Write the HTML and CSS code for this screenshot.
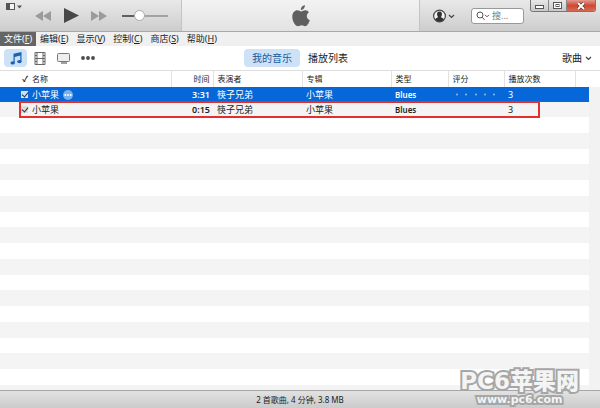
FILE: index.html
```
<!DOCTYPE html>
<html lang="zh-CN">
<head>
  <meta charset="UTF-8" />
  <meta name="viewport" content="width=device-width, initial-scale=1" />
  <title>iTunes</title>
  <link rel="stylesheet" href="styles.css">
</head>
<body>
  <header class="toolbar">
    <div class="player">
      <button class="icon-btn window-menu" aria-label="窗口菜单">
        <svg width="16" height="9" viewBox="0 0 16 9">
          <rect x="0.5" y="1.5" width="8" height="6" fill="#f4f4f4" stroke="#555" />
          <rect x="1" y="2" width="3" height="5" fill="#555" />
          <path d="M11 3.5h5l-2.500 3z" fill="#555" />
        </svg>
      </button>
      <button class="icon-btn" aria-label="上一首">
        <svg width="17" height="10" viewBox="0 0 17 10"><path d="M8 0v10L0 5zM16 0v10L8 5z" fill="#9b9b9b" /></svg>
      </button>
      <button class="icon-btn" aria-label="播放">
        <svg width="15" height="15" viewBox="0 0 15 15"><path d="M0 0l15 7.500L0 15z" fill="#484848" /></svg>
      </button>
      <button class="icon-btn" aria-label="下一首">
        <svg width="17" height="10" viewBox="0 0 17 10"><path d="M0 0l8 5-8 5zM8 0l8 5-8 5z" fill="#9b9b9b" /></svg>
      </button>
      <input type="range" class="volume" min="0" max="100" value="34" aria-label="音量" />
    </div>

    <div class="screen">
      <svg width="18" height="22" viewBox="0 0 18 22" fill="#5f5f5f">
        <path d="M12.800 0c.3 2.700-1.700 5-4 5.100C8.600 2.700 10.500.4 12.800 0z" />
        <path d="M9.300 6.400c1 0 2-1.100 4-1.100 1.500 0 2.900.8 3.700 2-3.300 2-2.700 6.600.8 7.900-.9 2.800-2.700 6-4.600 6-1.400 0-1.900-.9-3.600-.9s-2.200.9-3.500.9C3.400 21.200.3 16.500.3 11.700c0-4.200 2.500-6.400 5-6.400 1.700 0 3 1.100 4 1.100z" />
      </svg>
    </div>

    <div class="account">
      <button class="icon-btn user" aria-label="帐户">
        <svg width="22" height="14" viewBox="0 0 22 14">
          <circle cx="6.500" cy="7" r="5.900" fill="#f2f2f2" stroke="#444" stroke-width="1.200" />
          <path d="M6.500 2.500c2 0 2.700 1.400 2.400 3.200-.2 1.200-.6 1.700-.9 2.200.1 1 2.300 1 3 2.300C9.800 12 8.300 12.600 6.500 12.600S3.200 12 2 10.200c.7-1.300 2.900-1.300 3-2.300-.3-.5-.7-1-.9-2.200C3.800 3.900 4.500 2.500 6.500 2.500z" fill="#333" />
          <path d="M16 6l2.500 2.500L21 6" fill="none" stroke="#444" stroke-width="1.200" />
        </svg>
      </button>
      <label class="search">
        <svg width="14" height="10" viewBox="0 0 14 10" fill="none" stroke="#555">
          <circle cx="4" cy="4" r="3" />
          <path d="M6.200 6.200L8.500 8.800M9 3.800l2 2 2-2" />
        </svg>
        <input type="text" placeholder="搜..." aria-label="搜索" />
      </label>
    </div>

    <div class="window-controls">
      <button aria-label="最小化">
        <svg width="10" height="8" viewBox="0 0 10 8"><rect x="0.500" y="3.500" width="8" height="3" fill="#fff" stroke="#555" /></svg>
      </button>
      <button aria-label="最大化">
        <svg width="10" height="8" viewBox="0 0 10 8" fill="#fff" stroke="#555"><rect x="0.500" y="0.500" width="8" height="6" /><rect x="3" y="2.500" width="3" height="2" /></svg>
      </button>
      <button class="close" aria-label="关闭">
        <svg width="10" height="8" viewBox="0 0 10 8"><path d="M2 1l6 6M8 1L2 7" stroke="#6b3a36" stroke-width="3.400" /><path d="M2 1l6 6M8 1L2 7" stroke="#fff" stroke-width="1.800" /></svg>
      </button>
    </div>
  </header>

  <nav class="menubar">
    <button class="active">文件(<u>F</u>)</button>
    <button>编辑(<u>E</u>)</button>
    <button>显示(<u>V</u>)</button>
    <button>控制(<u>C</u>)</button>
    <button>商店(<u>S</u>)</button>
    <button>帮助(<u>H</u>)</button>
  </nav>

  <div class="library">
    <div class="media">
      <button class="icon-btn selected" aria-label="音乐">
        <svg width="12" height="13" viewBox="0 0 12 13" fill="#1a62b0">
          <path d="M3.500 1.800L11.500 0v9.500h-1.200V3.600L4.700 4.900v5.800H3.500z" />
          <ellipse cx="2.700" cy="10.900" rx="2.200" ry="1.700" />
          <ellipse cx="9.400" cy="9.600" rx="2.200" ry="1.700" />
        </svg>
      </button>
      <button class="icon-btn" aria-label="影片">
        <svg width="12" height="13" viewBox="0 0 12 13" fill="none" stroke="#686868">
          <path d="M1 .5h10v12H1zM3 .5v12M9 .5v12M3 6.500h6" />
          <path d="M1 3.500h2M1 6.500h2M1 9.500h2M9 3.500h2M9 6.500h2M9 9.500h2" />
        </svg>
      </button>
      <button class="icon-btn" aria-label="电视节目">
        <svg width="14" height="11" viewBox="0 0 14 11"><rect x="0.500" y="0.500" width="12" height="8" rx="1" fill="#eee" stroke="#777" /><path d="M4 10h6" stroke="#777" stroke-width="1.400" /></svg>
      </button>
      <button class="icon-btn" aria-label="更多">
        <svg width="14" height="4" viewBox="0 0 14 4" fill="#4a4a4a"><circle cx="2" cy="2" r="1.900" /><circle cx="7" cy="2" r="1.900" /><circle cx="12" cy="2" r="1.900" /></svg>
      </button>
    </div>
    <div class="tabs">
      <button class="selected">我的音乐</button>
      <button>播放列表</button>
    </div>
    <button class="view">歌曲
      <svg width="7" height="5" viewBox="0 0 7 5"><path d="M1 1l2.500 2.500L6 1" fill="none" stroke="#444" stroke-width="1.200" /></svg>
    </button>
  </div>

  <main class="list">
    <table class="songs">
      <colgroup>
        <col class="c-check"><col class="c-name"><col class="c-time"><col class="c-artist"><col class="c-album">
        <col class="c-genre"><col class="c-rating"><col class="c-plays"><col class="c-end">
      </colgroup>
      <thead>
        <tr>
          <th class="check">✓</th>
          <th class="name">名称</th>
          <th class="time">时间</th>
          <th>表演者</th>
          <th>专辑</th>
          <th>类型</th>
          <th>评分</th>
          <th>播放次数</th>
          <th></th>
        </tr>
      </thead>
      <tbody>
        <tr class="playing">
          <td class="check"><input type="checkbox" checked aria-label="小苹果 3:31" /></td>
          <td class="name">小苹果
            <button class="more" aria-label="更多选项">
              <svg width="10" height="10" viewBox="0 0 10 10"><circle cx="5" cy="5" r="5" fill="#78b0ef" /><g fill="#fff"><circle cx="2.300" cy="5" r="1" /><circle cx="5" cy="5" r="1" /><circle cx="7.700" cy="5" r="1" /></g></svg>
            </button>
          </td>
          <td class="time">3:31</td>
          <td>筷子兄弟</td>
          <td>小苹果</td>
          <td class="genre">Blues</td>
          <td>
            <svg class="stars" width="46" height="3" viewBox="0 0 46 3" fill="#8cbcf2">
              <circle cx="5" cy="1.500" r="1" /><circle cx="14" cy="1.500" r="1" /><circle cx="24" cy="1.500" r="1" /><circle cx="33" cy="1.500" r="1" /><circle cx="42" cy="1.500" r="1" />
            </svg>
          </td>
          <td>3</td>
          <td></td>
        </tr>
        <tr>
          <td class="check"><input type="checkbox" checked aria-label="小苹果 0:15" /></td>
          <td class="name">小苹果</td>
          <td class="time">0:15</td>
          <td>筷子兄弟</td>
          <td>小苹果</td>
          <td class="genre">Blues</td>
          <td></td>
          <td>3</td>
          <td></td>
        </tr>
      </tbody>
    </table>
    <div class="empty-rows"></div>
    <div class="scrollbar"></div>
    <div class="highlight"></div>
  </main>

  <footer class="status">2 首歌曲, 4 分钟, 3.8 MB</footer>

  <div class="watermark">
    <div class="site">PC6苹果网</div>
    <div class="url">www.pc6.com</div>
  </div>
</body>
</html>
```

FILE: styles.css
```
* {
  box-sizing: border-box;
}

body {
  display: flex;
  flex-direction: column;
  position: relative;
  height: 100vh;
  margin: 0;
  overflow: hidden;
  background: #fff;
  color: #222;
  font-family: "Noto Sans", "Noto Sans CJK SC", sans-serif;
  font-size: 9px;
  line-height: 12px;
}

button {
  padding: 0;
  border: 0;
  background: none;
  color: inherit;
  font: inherit;
}

svg {
  display: block;
}

.icon-btn {
  display: flex;
  align-items: center;
  justify-content: center;
}

/* top bar */
.toolbar {
  display: grid;
  grid-template-columns: 182px 1fr 181px;
  position: relative;
  height: 32px;
  border-bottom: 1px solid #a9a9a9;
  background: linear-gradient(#e9e9e9, #cdcdcd);
}

.player {
  display: flex;
  align-items: center;
  gap: 12px;
  padding-left: 6px;
  border-right: 1px solid #c4c4c4;
}

.window-menu {
  align-self: flex-start;
  margin: 2px 1px 0 0;
}

.volume {
  appearance: none;
  width: 46px;
  height: 12px;
  margin: 0 0 0 2px;
  background: none;
}

.volume::-webkit-slider-runnable-track {
  height: 2px;
  background: linear-gradient(90deg, #606060 36%, #a3a3a3 36%);
}

.volume::-webkit-slider-thumb {
  appearance: none;
  width: 11px;
  height: 11px;
  margin-top: -5px;
  border: 1px solid #aaa;
  border-radius: 50%;
  background: #fff;
}

.screen {
  display: flex;
  align-items: center;
  justify-content: center;
  background: linear-gradient(#f3f3f3, #e2e2e2);
}

.account {
  display: flex;
  align-items: center;
  gap: 16px;
  padding-left: 13px;
  border-left: 1px solid #c4c4c4;
}

.search {
  display: flex;
  align-items: center;
  gap: 2px;
  width: 53px;
  height: 16px;
  padding-left: 4px;
  border: 1px solid #999;
  border-radius: 3px;
  background: #fff;
}

.search input {
  flex: 1;
  min-width: 0;
  padding: 0;
  border: 0;
  outline: 0;
  background: none;
  font: inherit;
}

.search input::placeholder {
  color: #777;
}

.window-controls {
  display: flex;
  position: absolute;
  top: 0;
  right: 4px;
  height: 12px;
  border: 1px solid #777;
  border-top: 0;
  border-radius: 0 0 3px 3px;
  overflow: hidden;
}

.window-controls button {
  display: flex;
  align-items: center;
  justify-content: center;
  width: 18px;
  border-right: 1px solid #888;
  background: linear-gradient(#e8e8e8, #c8c8c8);
}

.window-controls .close {
  width: 28px;
  border-right: 0;
  background: linear-gradient(#e39a8c, #cf4a35 50%, #d9694f);
}

/* menu */
.menubar {
  display: flex;
  height: 14px;
  background: #f0f0f0;
}

.menubar button {
  padding: 0 4px;
}

.menubar .active {
  background: #656565;
  color: #fff;
}

/* library switcher */
.library {
  display: grid;
  grid-template-columns: 1fr auto 1fr;
  align-items: center;
  height: 25px;
  border-bottom: 1px solid #dedede;
  font-size: 10px;
}

.media {
  display: flex;
  gap: 1px;
  padding-left: 4px;
}

.media button {
  width: 23px;
  height: 18px;
}

.library .selected {
  border-radius: 4px;
  background: #cde2f7;
  color: #175a9c;
}

.tabs {
  display: flex;
}

.tabs button {
  height: 18px;
  padding: 0 8px;
}

.view {
  display: flex;
  align-items: center;
  justify-self: end;
  gap: 3px;
  margin-right: 8px;
}

/* song list */
.list {
  display: flex;
  flex: 1;
  flex-direction: column;
  position: relative;
  min-height: 0;
}

.songs {
  width: 100%;
  table-layout: fixed;
  border-collapse: collapse;
}

.c-check { width: 29px; }
.c-time { width: 42px; }
.c-artist { width: 89px; }
.c-album { width: 89px; }
.c-genre { width: 57px; }
.c-rating { width: 56px; }
.c-plays { width: 71px; }
.c-end { width: 25px; }

.songs th,
.songs td {
  height: 15px;
  padding: 0 0 0 4px;
  text-align: left;
  white-space: nowrap;
}

.songs th {
  height: 16px;
  border-right: 1px solid #e2e2e2;
  font-size: 8px;
  font-weight: normal;
}

.songs th:last-child,
.songs th.check {
  border-right: 0;
}

.songs th.check {
  font-weight: bold;
}

.songs .name {
  padding-left: 3px;
}

.songs .time {
  padding: 0 3px 0 0;
  text-align: right;
}

.songs .check {
  padding: 0 1px 0 0;
  text-align: right;
}

.songs td.time,
.genre {
  font-weight: 600;
}

.songs .genre {
  font-size: 8px;
}

.songs tbody tr {
  background: #f4f4f4;
}

.songs tbody .playing {
  background: #0667d8;
  color: #fff;
}

.check input {
  appearance: none;
  display: block;
  position: relative;
  width: 7px;
  height: 7px;
  margin: 0 0 0 auto;
  background: #dcdcdc;
}

.check input:checked::before {
  content: "";
  position: absolute;
  top: 0;
  left: 2px;
  width: 3px;
  height: 5px;
  border: solid #333;
  border-width: 0 1px 1px 0;
  transform: rotate(40deg);
}

.playing .check input {
  background: #cfe2fa;
}

.more {
  display: inline-block;
  margin-left: 2px;
  vertical-align: middle;
}

.empty-rows {
  flex: 1;
  background: repeating-linear-gradient(#fff 0 5.77%, #f4f4f4 5.77% 11.54%);
}

.scrollbar {
  position: absolute;
  top: 16px;
  right: 0;
  bottom: 0;
  width: 11px;
  background: #f2f2f2;
}

.highlight {
  position: absolute;
  top: 30px;
  left: 19px;
  width: 521px;
  height: 17px;
  border: 2px solid #e3302f;
}

.status {
  height: 18px;
  border-top: 1px solid #a6a6a6;
  background: linear-gradient(#e2e2e2, #cbcbcb);
  font-size: 8px;
  line-height: 17px;
  text-align: center;
}

.watermark {
  position: absolute;
  right: 21px;
  bottom: 2px;
  color: #f4f4f4;
  font-family: "DejaVu Sans", "Noto Sans CJK SC", sans-serif;
  font-weight: 900;
  text-align: center;
  paint-order: stroke fill;
  -webkit-text-stroke: 4px #a6a6a6;
}

.site {
  font-size: 23px;
  line-height: 26px;
}

.url {
  font-size: 11px;
  line-height: 12px;
}
```
